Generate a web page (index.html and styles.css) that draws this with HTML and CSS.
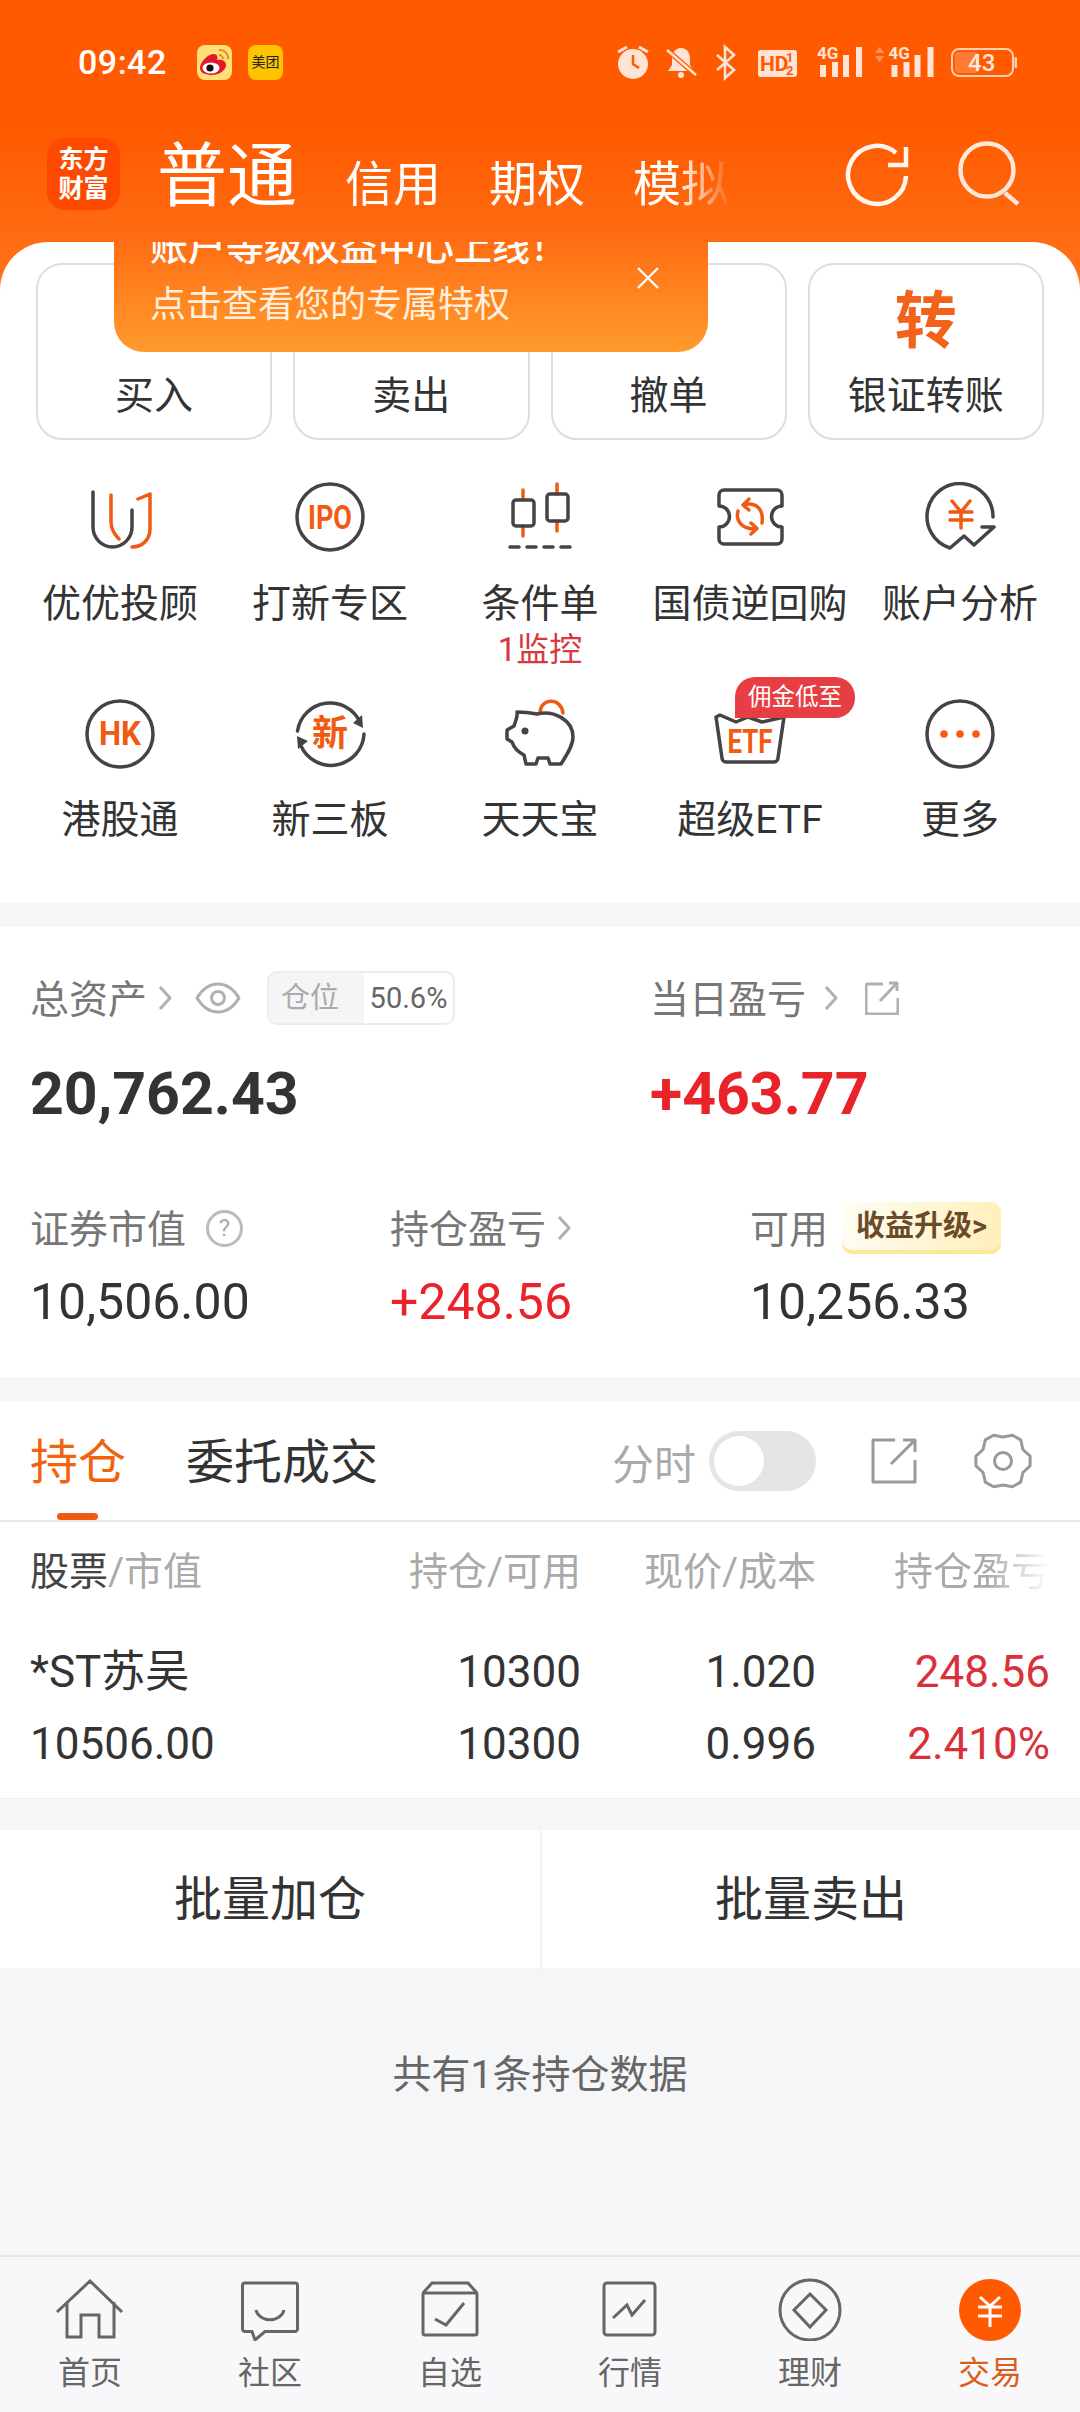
FILE: index.html
```html
<!DOCTYPE html>
<html lang="zh-CN">

<head>
    <meta charset="UTF-8">
    <meta name="viewport" content="width=device-width, initial-scale=1.0">
    <title>交易</title>
    <link rel="stylesheet" href="styles.css">
</head>

<body>
    <div class="app">
        <div class="top">
            <div class="status">
                <span class="time">09:42</span>
                <svg class="app-ic weibo" viewBox="0 0 35 35">
                    <rect width="35" height="35" rx="8" fill="#ffdf78" />
                    <path d="M3 23c0-6 8-14 14-14 3 0 4 3 3 6 5-1 9 1 9 5 0 6-8 10-14 10S3 28 3 23z" fill="#e6162d" />
                    <ellipse cx="14" cy="23" rx="8.5" ry="5.5" fill="#fff" />
                    <circle cx="13" cy="23" r="3.6" fill="#111" />
                    <path class="wb-arc" d="M22 5a8 8 0 0 1 9 9M22 10a4 4 0 0 1 4 4" />
                </svg>
                <span class="app-ic meituan">美团</span>
                <div class="status-right">
                    <svg width="50" height="40" viewBox="0 0 50 40">
                        <circle cx="17" cy="22" r="15" fill="#ffe3d5" />
                        <path d="M17 13v9l6 4" fill="none" stroke="#ff5a00" stroke-width="2.5" />
                        <path d="M2 10l9-5M23 5l9 5" stroke="#ffe3d5" stroke-width="3" />
                    </svg>
                    <svg width="49" height="40" viewBox="0 0 49 40">
                        <path d="M15 6c-6 0-9 5-9 11v6l-4 6h26l-4-6v-6c0-6-3-11-9-11z" fill="#ffe3d5" />
                        <circle cx="15" cy="33" r="3" fill="#ffe3d5" />
                        <path d="M1 8l29 25" stroke="#ff5a00" stroke-width="5" />
                        <path d="M1 8l29 25" stroke="#ffe3d5" stroke-width="2.5" />
                    </svg>
                    <svg width="43" height="40" viewBox="0 0 43 40">
                        <path d="M2 13l17 15-9 8V5l9 8L2 28" fill="none" stroke="#ffe3d5" stroke-width="2.6" />
                    </svg>
                    <svg width="59" height="40" viewBox="0 0 59 40">
                        <rect y="8" width="39" height="27" rx="3" fill="#ffe3d5" />
                        <text class="hd" x="2" y="29">HD</text>
                        <text class="hd-small" x="28" y="20">1</text>
                        <text class="hd-small" x="28" y="33">2</text>
                    </svg>
                    <svg width="58" height="40" viewBox="0 0 58 40">
                        <text class="sig-text" x="0" y="17">4G</text>
                        <path class="bars" d="M3 23h6v12H3zM15 20h6v15h-6zM26 13h6v22h-6zM39 5h6v30h-6z" />
                    </svg>
                    <svg width="76" height="40" viewBox="0 0 76 40">
                        <path d="M0 11l4.500-6L9 11zM0 14l4.500 6L9 14z" fill="#ff9360" />
                        <g transform="translate(13.500)">
                            <text class="sig-text" x="0" y="17">4G</text>
                            <path class="bars" d="M3 23h6v12H3zM15 20h6v15h-6zM26 13h6v22h-6zM39 5h6v30h-6z" />
                        </g>
                    </svg>
                    <svg width="66" height="40" viewBox="0 0 66 40">
                        <rect x="1" y="7" width="61" height="27" rx="7" fill="none" stroke="#ffcdb2" stroke-width="2" />
                        <rect x="4" y="10" width="24" height="21" rx="4" fill="#ff7a33" />
                        <rect x="63.500" y="15" width="2.500" height="11" rx="1.200" fill="#ffcdb2" />
                        <text class="batt" x="17" y="29">43</text>
                    </svg>
                </div>
            </div>
            <div class="head">
                <div class="logo">东方<br>财富</div>
                <div class="head-tabs">
                    <span class="head-tab active">普通</span>
                    <span class="head-tab">信用</span>
                    <span class="head-tab">期权</span>
                    <span class="head-tab">模拟</span>
                </div>
                <svg class="refresh" width="70" height="70" viewBox="0 0 70 70">
                    <path d="M64 36A29 29 0 1 1 54 13M46 25h18V7" fill="none" stroke="#fff5ee" stroke-width="4.500" />
                </svg>
                <svg class="search" width="70" height="70" viewBox="0 0 70 70">
                    <circle cx="32" cy="33" r="26.500" fill="none" stroke="#ffe6d6" stroke-width="4.500" />
                    <path d="M50 56l13 11" stroke="#ffe6d6" stroke-width="4.500" />
                </svg>
            </div>
        </div>

        <div class="card">
            <div class="banner">
                <p class="banner-title">账户等级权益中心上线！</p>
                <p class="banner-sub">点击查看您的专属特权</p>
                <svg class="banner-close" width="24" height="24" viewBox="0 0 24 24">
                    <path d="M2 2l20 20M22 2L2 22" stroke="#fff" stroke-width="2.400" />
                </svg>
            </div>

            <div class="quick">
                <div class="quick-btn"><span class="quick-ic"></span><span>买入</span></div>
                <div class="quick-btn"><span class="quick-ic"></span><span>卖出</span></div>
                <div class="quick-btn"><span class="quick-ic"></span><span>撤单</span></div>
                <div class="quick-btn"><span class="quick-ic">转</span><span>银证转账</span></div>
            </div>

            <div class="menu">
                <div class="menu-item">
                    <svg class="menu-ic" viewBox="0 0 72 72">
                        <path class="dk" d="M9 10v35a19.500 20 0 0 0 39 0V28" />
                        <path class="or" d="M27 13v27c0 7 3 12 8 17M54 17l12-5v35c0 11-8 18-18 18" />
                    </svg>
                    <span class="menu-label">优优投顾</span>
                </div>
                <div class="menu-item">
                    <svg class="menu-ic" viewBox="0 0 72 72">
                        <circle class="dk" cx="36" cy="35" r="33" />
                        <text class="ic-text" x="36" y="47" textLength="44" lengthAdjust="spacingAndGlyphs">IPO</text>
                    </svg>
                    <span class="menu-label">打新专区</span>
                </div>
                <div class="menu-item">
                    <svg class="menu-ic" viewBox="0 0 72 72">
                        <path class="or" d="M19 8v10M19 44v10M53 2v10M53 39v10" />
                        <rect class="dk" x="9" y="18" width="21" height="26" rx="3" />
                        <rect class="dk" x="43" y="12" width="21" height="27" rx="3" />
                        <path class="dk" d="M6 65h9M23 65h9M40 65h9M57 65h9" />
                    </svg>
                    <span class="menu-label">条件单</span>
                    <span class="menu-sub">1监控</span>
                </div>
                <div class="menu-item">
                    <svg class="menu-ic" viewBox="0 0 72 72">
                        <path class="dk" d="M10 8h53a5 5 0 0 1 5 5v11a10.500 10.500 0 0 0 0 21v12a5 5 0 0 1-5 5H10a5 5 0 0 1-5-5V45a10.500 10.500 0 0 0 0-21V13a5 5 0 0 1 5-5z" />
                        <path class="or" d="M31 22.500C41 20 50 26 48 41M35 17l-6 6 6 5M24 29c-3 11 6 19 18 17.500M37 41l6 5.500-6 5.500" />
                    </svg>
                    <span class="menu-label">国债逆回购</span>
                </div>
                <div class="menu-item">
                    <svg class="menu-ic" viewBox="0 0 72 72">
                        <path class="dk" d="M69 35A33 33 0 1 0 26 66l14-12 10 9 20-18H58" />
                        <path class="or" d="M28 19l9 11 9-11M26 30h22M26 38h22M37 30v16" />
                    </svg>
                    <span class="menu-label">账户分析</span>
                </div>
                <div class="menu-item">
                    <svg class="menu-ic" viewBox="0 0 72 72">
                        <circle class="dk" cx="36" cy="36" r="33" />
                        <text class="ic-text" x="36" y="47" textLength="42" lengthAdjust="spacingAndGlyphs">HK</text>
                    </svg>
                    <span class="menu-label">港股通</span>
                </div>
                <div class="menu-item">
                    <svg class="menu-ic" viewBox="0 0 72 72">
                        <path class="dk" d="M3.500 33A33 33 0 0 1 66 24M70 36A33 33 0 0 1 7 48" />
                        <path d="M69 30l-1-13-9 8zM3 38l1 13 10-8z" fill="#444" />
                        <text class="ic-text cjk" x="36" y="48">新</text>
                    </svg>
                    <span class="menu-label">新三板</span>
                </div>
                <div class="menu-item">
                    <svg class="menu-ic" viewBox="0 0 72 72">
                        <path class="or" d="M36 14c1-14 21-15 23 1" />
                        <path class="dk" d="M13 14c7 0 15 1 20 2 17-4 36 6 36 23 0 9-7 19-12 27H46l-2-6H34l-2 6H22l-2-9c-6-3-10-7-12-13l-5-3v-9l7-4c1-4 4-9 3-14z" />
                        <circle cx="21" cy="33" r="3.500" fill="#444" />
                    </svg>
                    <span class="menu-label">天天宝</span>
                </div>
                <div class="menu-item">
                    <svg class="menu-ic" viewBox="0 0 72 72">
                        <path class="dk" d="M2 19l4-2 16 7 12-5 14 5 22-5-6 41a4 4 0 0 1-4 4H12a4 4 0 0 1-4-4z" />
                        <text class="ic-text" x="36" y="55" textLength="45" lengthAdjust="spacingAndGlyphs">ETF</text>
                    </svg>
                    <span class="menu-label">超级ETF</span>
                    <span class="menu-badge">佣金低至</span>
                </div>
                <div class="menu-item">
                    <svg class="menu-ic" viewBox="0 0 72 72">
                        <circle class="dk" cx="36" cy="36" r="33" />
                        <circle cx="20" cy="36" r="3.800" fill="#f15a12" />
                        <circle cx="36" cy="36" r="3.800" fill="#f15a12" />
                        <circle cx="52" cy="36" r="3.800" fill="#f15a12" />
                    </svg>
                    <span class="menu-label">更多</span>
                </div>
            </div>
        </div>

        <div class="assets">
            <div class="assets-top">
                <div class="assets-main">
                    <div class="label-row">
                        <span>总资产</span>
                        <svg class="chev" width="14" height="24" viewBox="0 0 14 24"><path d="M2 1l10 11L2 23" /></svg>
                        <svg class="eye" width="46" height="32" viewBox="0 0 46 32">
                            <path d="M2 16C8 6 15 2 23 2s15 4 21 14c-6 10-13 14-21 14S8 26 2 16z" />
                            <circle cx="23" cy="16" r="6.500" />
                        </svg>
                        <div class="pill"><span class="pill-key">仓位</span><span class="pill-val">50.6%</span></div>
                    </div>
                    <div class="big-num">20,762.43</div>
                </div>
                <div class="assets-main">
                    <div class="label-row">
                        <span>当日盈亏</span>
                        <svg class="chev chev-day" width="14" height="24" viewBox="0 0 14 24"><path d="M2 1l10 11L2 23" /></svg>
                        <svg class="share share-day" width="34" height="34" viewBox="0 0 34 34">
                            <path d="M18 3H3a2 2 0 0 0-2 2v26a2 2 0 0 0 2 2h28a2 2 0 0 0 2-2V17M15 20L32 2M24 2h8v8" />
                        </svg>
                    </div>
                    <div class="big-num red">+463.77</div>
                </div>
            </div>
            <div class="assets-bottom">
                <div class="assets-col">
                    <div class="label-row">
                        <span>证券市值</span>
                        <span class="help">?</span>
                    </div>
                    <div class="mid-num">10,506.00</div>
                </div>
                <div class="assets-col">
                    <div class="label-row">
                        <span>持仓盈亏</span>
                        <svg class="chev" width="14" height="24" viewBox="0 0 14 24"><path d="M2 1l10 11L2 23" /></svg>
                    </div>
                    <div class="mid-num red">+248.56</div>
                </div>
                <div class="assets-col">
                    <div class="label-row">
                        <span>可用</span>
                        <span class="upgrade">收益升级&gt;</span>
                    </div>
                    <div class="mid-num">10,256.33</div>
                </div>
            </div>
        </div>

        <div class="hold">
            <div class="hold-tabs">
                <span class="hold-tab active">持仓</span>
                <span class="hold-tab">委托成交</span>
                <div class="hold-tools">
                    <span class="hold-tool-label">分时</span>
                    <span class="toggle"><span class="knob"></span></span>
                    <svg class="share share-lg" width="46" height="46" viewBox="0 0 46 46">
                        <path d="M24 2H2v42h42V22M20 26L44 2M32 2h12v12" />
                    </svg>
                    <svg class="gear" width="60" height="60" viewBox="0 0 60 60">
                        <path d="M30 6l9.400-1.800 8.300 4.700 2.200 9.600 7.200 6.700v9.600l-7.200 6.700-2.200 9.600-8.300 4.700L30 54l-9.400 1.800-8.300-4.700-2.200-9.600-7.200-6.700v-9.600l7.200-6.700 2.200-9.600 8.300-4.700z" />
                        <circle cx="30" cy="30" r="8.500" />
                    </svg>
                </div>
            </div>
            <div class="table">
                <div class="t-head">
                    <span><b>股票</b>/市值</span>
                    <span>持仓/可用</span>
                    <span>现价/成本</span>
                    <span class="fade">持仓盈亏</span>
                </div>
                <div class="t-row">
                    <span class="name">*ST苏吴</span>
                    <span>10300</span>
                    <span>1.020</span>
                    <span class="loss">248.56</span>
                </div>
                <div class="t-row">
                    <span>10506.00</span>
                    <span>10300</span>
                    <span>0.996</span>
                    <span class="loss">2.410%</span>
                </div>
            </div>
        </div>

        <div class="batch">
            <span>批量加仓</span>
            <span>批量卖出</span>
        </div>

        <div class="empty">共有1条持仓数据</div>

        <div class="nav">
            <div class="nav-item">
                <svg class="nav-ic" viewBox="0 0 72 64">
                    <path d="M3 35L36 4l32 31M13 25v35h14V38h18v22h15V25" />
                </svg>
                <span>首页</span>
            </div>
            <div class="nav-item">
                <svg class="nav-ic" viewBox="0 0 72 64">
                    <path d="M11 6h50a2.500 2.500 0 0 1 2.500 2.500V52a2.500 2.500 0 0 1-2.500 2.500H31L21 63l-3-8.500h-7A2.500 2.500 0 0 1 8.500 52V8.500A2.500 2.500 0 0 1 11 6z" />
                    <path d="M22 33c3 13 25 13 28 0" />
                </svg>
                <span>社区</span>
            </div>
            <div class="nav-item">
                <svg class="nav-ic" viewBox="0 0 72 64">
                    <path d="M10 16h52a1 1 0 0 1 1 1v39a2 2 0 0 1-2 2H11a2 2 0 0 1-2-2V17a1 1 0 0 1 1-1zM9 16l9-10h36l9 10" />
                    <path d="M21 42l11 6 18-22" />
                </svg>
                <span>自选</span>
            </div>
            <div class="nav-item">
                <svg class="nav-ic" viewBox="0 0 72 64">
                    <rect x="10" y="6" width="51" height="52" rx="3" />
                    <path d="M19 41l14-13 5 10 13-15" />
                </svg>
                <span>行情</span>
            </div>
            <div class="nav-item">
                <svg class="nav-ic" viewBox="0 0 72 64">
                    <circle cx="36" cy="33" r="30" />
                    <path d="M36 17l16 16-16 17-16-17z" />
                </svg>
                <span>理财</span>
            </div>
            <div class="nav-item active">
                <svg class="nav-ic" viewBox="0 0 72 64">
                    <circle class="trade-bg" cx="36" cy="33" r="31" />
                    <path class="trade-yen" d="M26 20l10 9 10-9M24 30h24M24 39h24M36 29v21" />
                </svg>
                <span>交易</span>
            </div>
        </div>
    </div>
</body>

</html>
```

FILE: styles.css
```css
* {
    box-sizing: border-box;
}

body {
    margin: 0;
    background-color: #f5f6f8;
    font-family: Roboto, "Noto Sans CJK SC", sans-serif;
    color: #333;
}

p {
    margin: 0;
}

.app {
    width: 1080px;
    height: 2412px;
    display: flex;
    flex-direction: column;
    overflow: hidden;
}

/* orange header */
.top {
    height: 290px;
    flex: none;
    background: linear-gradient(#ff5a00 0, #ff5a00 130px, #ff741c 290px);
    color: #fff;
}

.status {
    height: 124px;
    padding: 42px 63px 0 78px;
    display: flex;
    align-items: flex-start;
}

.time {
    width: 119px;
    height: 40px;
    line-height: 40px;
    font-size: 34px;
    font-weight: 500;
    letter-spacing: 0.5px;
}

.app-ic {
    width: 35px;
    height: 35px;
    margin-top: 3px;
}

.wb-arc {
    fill: none;
    stroke: #f08a1d;
    stroke-width: 2;
}

.meituan {
    margin-left: 16px;
    border-radius: 8px;
    background-color: #ffc300;
    color: #222;
    font-size: 14px;
    line-height: 35px;
    text-align: center;
}

.status-right {
    margin-left: auto;
    display: flex;
}

.hd {
    font-size: 21px;
    font-weight: 700;
    fill: #ff5a00;
}

.hd-small {
    font-size: 13px;
    font-weight: 700;
    fill: #ff5a00;
}

.sig-text {
    font-size: 17px;
    font-weight: 700;
    fill: #ffe3d5;
}

.bars {
    fill: #ffe3d5;
}

.batt {
    font-size: 24px;
    font-weight: 500;
    fill: #ffe9dd;
}

.head {
    height: 86px;
    padding-left: 47px;
    display: flex;
    align-items: flex-start;
}

.logo {
    width: 73px;
    height: 72px;
    flex: none;
    margin-top: 14px;
    border-radius: 18px;
    background-color: #fe4a00;
    font-size: 25px;
    font-weight: 700;
    line-height: 29px;
    text-align: center;
    padding-top: 7px;
}

.head-tabs {
    width: 575px;
    flex: none;
    margin: 11px 0 0 37px;
    display: flex;
    align-items: baseline;
    gap: 48px;
    white-space: nowrap;
    overflow: hidden;
    -webkit-mask-image: linear-gradient(to right, #000 520px, transparent 575px);
    mask-image: linear-gradient(to right, #000 520px, transparent 575px);
}

.head-tab {
    font-size: 48px;
    line-height: 84px;
}

.head-tab.active {
    font-size: 70px;
}

.refresh {
    margin: 16px 0 0 110px;
    flex: none;
}

.search {
    margin: 13px 0 0 43px;
    flex: none;
}

/* white card with shortcuts */
.card {
    margin-top: -48px;
    height: 661px;
    flex: none;
    border-radius: 48px 48px 0 0;
    background-color: #fff;
    padding: 21px 36px 0;
    position: relative;
}

.banner {
    position: absolute;
    left: 114px;
    top: 0;
    width: 594px;
    height: 110px;
    padding-left: 36px;
    border-radius: 0 0 30px 30px;
    background: linear-gradient(#ff6e14, #ff9b2d);
    color: #fff;
    overflow: hidden;
    z-index: 2;
}

.banner-title {
    margin-top: -22px;
    font-size: 38px;
    font-weight: 500;
    line-height: 55px;
    white-space: nowrap;
}

.banner-sub {
    padding-top: 3px;
    font-size: 36px;
    line-height: 55px;
    color: #ffefdc;
}

.banner-close {
    position: absolute;
    left: 522px;
    top: 24px;
}

.quick {
    display: grid;
    grid-template-columns: repeat(4, 1fr);
    gap: 21px;
}

.quick-btn {
    height: 177px;
    border: 2px solid #dedede;
    border-radius: 26px;
    display: flex;
    flex-direction: column;
    align-items: center;
    font-size: 39px;
    line-height: 50px;
}

.quick-ic {
    height: 106px;
    padding-top: 21px;
    font-size: 62px;
    line-height: 72px;
    font-weight: 700;
    color: #f3621b;
}

.menu {
    margin: 42px -21px 0;
    display: grid;
    grid-template-columns: repeat(5, 210px);
    row-gap: 28px;
}

.menu-item {
    display: flex;
    flex-direction: column;
    align-items: center;
    position: relative;
}

.menu-ic {
    width: 72px;
    height: 72px;
}

.dk,
.or {
    fill: none;
    stroke-width: 3.500;
    stroke-linecap: round;
    stroke-linejoin: round;
}

.dk {
    stroke: #444;
}

.or {
    stroke: #f15a12;
}

.ic-text {
    font-size: 34px;
    font-weight: 700;
    fill: #f15a12;
    text-anchor: middle;
}

.ic-text.cjk {
    font-size: 36px;
    font-family: "Noto Sans CJK SC", sans-serif;
}

.menu-label {
    margin-top: 25px;
    font-size: 39px;
    line-height: 50px;
    white-space: nowrap;
}

.menu-sub {
    margin-top: 1px;
    font-size: 33px;
    line-height: 40px;
    color: #d8383e;
}

.menu-badge {
    position: absolute;
    top: -21px;
    right: 0;
    width: 120px;
    height: 41px;
    border-radius: 20px 20px 20px 0;
    background-color: #e63e42;
    color: #fff;
    font-size: 23.500px;
    line-height: 41px;
    text-align: center;
    white-space: nowrap;
}

/* assets */
.assets {
    margin-top: 24px;
    height: 450px;
    flex: none;
    padding: 44px 0 0 30px;
    background-color: #fff;
}

.assets-top {
    display: flex;
}

.assets-main {
    width: 620px;
    flex: none;
}

.label-row {
    height: 54px;
    display: flex;
    align-items: center;
    font-size: 39px;
    color: #777;
    white-space: nowrap;
}

.label-row > span:first-child {
    padding-bottom: 4px;
}

.chev {
    margin-left: 11px;
}

.chev-day {
    margin-left: 18px;
}

.chev path,
.eye path,
.eye circle,
.share path,
.gear path,
.gear circle {
    fill: none;
    stroke: #b0b0b0;
    stroke-width: 3;
    stroke-linejoin: round;
}

.eye {
    margin-left: 23px;
}

.pill {
    margin-left: 26px;
    width: 188px;
    height: 54px;
    border: 2px solid #ececec;
    border-radius: 10px;
    display: flex;
    overflow: hidden;
    font-size: 29px;
    line-height: 50px;
}

.pill-key {
    width: 95px;
    padding-left: 12px;
    background-color: #f5f5f7;
    color: #aaa;
}

.pill-val {
    flex: 1;
    color: #666;
    text-align: center;
    white-space: nowrap;
}

.share-day {
    margin-left: 27px;
}

.big-num {
    margin-top: 34px;
    font-size: 59px;
    font-weight: 700;
    line-height: 70px;
    color: #333;
}

.big-num.red,
.mid-num.red {
    color: #e8242a;
}

.assets-bottom {
    margin-top: 72px;
    display: grid;
    grid-template-columns: repeat(3, 360px);
}

.help {
    margin-left: 20px;
    width: 37px;
    height: 37px;
    border: 3px solid #bbb;
    border-radius: 50%;
    color: #aaa;
    font-size: 24px;
    line-height: 31px;
    text-align: center;
}

.upgrade {
    margin-left: 14px;
    width: 159px;
    height: 52px;
    padding-left: 14px;
    border-radius: 10px;
    background: linear-gradient(100deg, #fffdf5, #ffefb8);
    box-shadow: inset 0 -4px 0 #ffe79a;
    color: #6b4a2a;
    font-size: 29px;
    font-weight: 700;
    line-height: 48px;
}

.mid-num {
    margin-top: 17px;
    font-size: 50px;
    line-height: 60px;
    color: #333;
}

/* holdings */
.hold {
    margin-top: 24px;
    height: 398px;
    flex: none;
    background-color: #fff;
    border-bottom: 1px solid #eeeeee;
}

.hold-tabs {
    height: 121px;
    padding-left: 30px;
    border-bottom: 2px solid #e8e8e8;
    display: flex;
    align-items: flex-start;
    gap: 60px;
    position: relative;
}

.hold-tab {
    font-size: 48px;
    line-height: 124px;
    height: 119px;
}

.hold-tab.active {
    color: #f0640f;
    position: relative;
}

.hold-tab.active::after {
    content: "";
    position: absolute;
    left: 27px;
    bottom: 0;
    width: 41px;
    height: 7px;
    border-radius: 4px;
    background-color: #f05a10;
}

.hold-tools {
    position: absolute;
    right: 47px;
    top: 30px;
    height: 60px;
    display: flex;
    align-items: center;
}

.hold-tool-label {
    font-size: 42px;
    color: #aaa;
}

.toggle {
    margin-left: 13px;
    width: 107px;
    height: 60px;
    border-radius: 30px;
    background-color: #e4e5e7;
    padding: 5px;
}

.knob {
    display: block;
    width: 50px;
    height: 50px;
    border-radius: 50%;
    background-color: #fff;
}

.share-lg {
    margin-left: 55px;
}

.share-lg path,
.gear path,
.gear circle {
    stroke: #999;
}

.gear {
    margin-left: 56px;
}

.table {
    padding: 26px 30px 0 30px;
}

.t-head,
.t-row {
    display: grid;
    grid-template-columns: 300px 251px 235px 234px;
    white-space: nowrap;
}

.t-head span:not(:first-child),
.t-row span:not(:first-child) {
    text-align: right;
}

.t-head {
    margin-bottom: 40px;
    font-size: 39px;
    line-height: 48px;
    color: #aaa;
}

.t-head b {
    font-weight: 400;
    color: #444;
}

.t-head .fade {
    -webkit-mask-image: linear-gradient(to right, #000 60%, transparent 100%);
    mask-image: linear-gradient(to right, #000 60%, transparent 100%);
    justify-self: end;
}

.t-row {
    font-size: 44px;
    line-height: 72px;
    color: #333;
}

.t-row .name {
    font-size: 44px;
}

.t-row .loss {
    color: #d9313a;
}

.batch {
    margin-top: 31px;
    height: 138px;
    flex: none;
    background-color: #fff;
    display: grid;
    grid-template-columns: 1fr 1fr;
    font-size: 48px;
    line-height: 140px;
    text-align: center;
}

.batch span + span {
    border-left: 2px solid #f2f2f2;
}

.empty {
    flex: 1;
    padding-top: 82px;
    font-size: 39px;
    line-height: 50px;
    text-align: center;
    color: #666;
}

/* bottom nav */
.nav {
    height: 157px;
    flex: none;
    padding-top: 20px;
    border-top: 2px solid #e6e6e8;
    background-color: #f8f8fa;
    display: grid;
    grid-template-columns: repeat(6, 180px);
}

.nav-item {
    display: flex;
    flex-direction: column;
    align-items: center;
    font-size: 32px;
    line-height: 44px;
    color: #666;
}

.nav-item.active {
    color: #d9601c;
}

.nav-ic {
    width: 72px;
    height: 64px;
    margin-bottom: 10px;
}

.nav-ic path,
.nav-ic rect,
.nav-ic circle {
    fill: none;
    stroke: #666;
    stroke-width: 3;
}

.nav-ic .trade-bg {
    fill: #ff5a00;
    stroke: none;
}

.nav-ic .trade-yen {
    stroke: #fff;
}
```
